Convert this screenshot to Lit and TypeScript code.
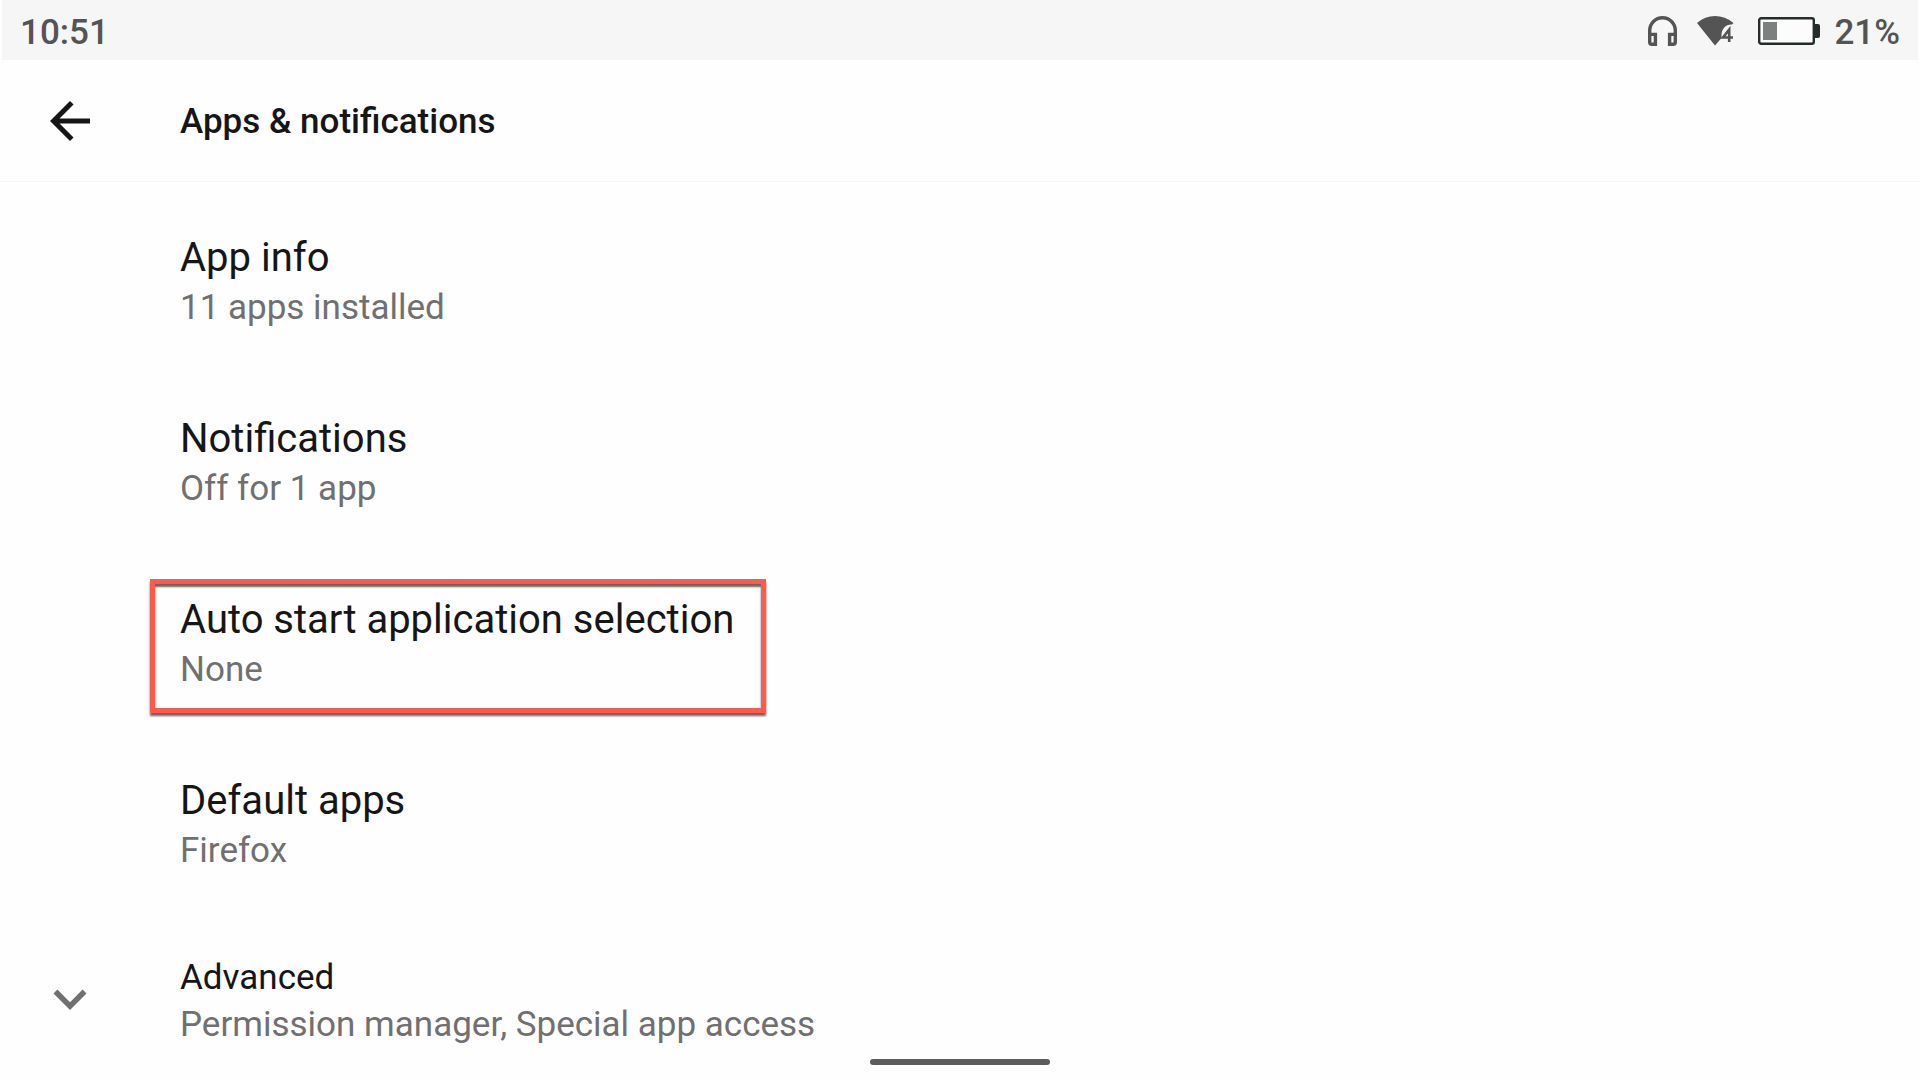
import { LitElement, html, css, svg } from "lit";
import { customElement, property } from "lit/decorators.js";

const backIcon = svg`<path d="M20 11H7.83l5.59-5.59L12 4l-8 8 8 8 1.41-1.41L7.83 13H20v-2z"/>`;
const expandIcon = svg`<path d="M16.59 8.59L12 13.17 7.41 8.59 6 10l6 6 6-6z"/>`;

interface Entry {
  title: string;
  summary: string;
  highlighted?: boolean;
}

const ENTRIES: Entry[] = [
  { title: "App info", summary: "11 apps installed" },
  { title: "Notifications", summary: "Off for 1 app" },
  { title: "Auto start application selection", summary: "None", highlighted: true },
  { title: "Default apps", summary: "Firefox" },
];

@customElement("status-bar")
export class StatusBar extends LitElement {
  @property() time = "";
  @property() battery = "";

  static styles = css`
    :host {
      display: flex;
      align-items: center;
      justify-content: space-between;
      box-sizing: border-box;
      height: 60px;
      margin: 0 2px;
      padding: 6px 18px 0;
      background: #f6f6f6;
      color: #545454;
      font-size: 35px;
      line-height: 48px;
      font-weight: 500;
    }
    .status,
    .icons {
      display: flex;
      align-items: center;
    }
    .icons {
      padding-bottom: 4px;
    }
    .headphones {
      margin-right: 20px;
    }
    .wifi {
      margin-right: 24px;
    }
    .cell {
      margin-right: 14px;
    }
    svg {
      display: block;
    }
  `;

  render() {
    return html`
      <time>${this.time}</time>
      <div class="status">
        <div class="icons">
          <svg class="headphones" width="29" height="30" viewBox="0 0 29 30" fill="none" stroke="#545454" stroke-width="3.400" aria-hidden="true">
            <path d="M1.700 20V14.500a12.800 12.800 0 0 1 25.600 0V20" />
            <path d="M1.700 18.400H7.400V28.300H3.700a2 2 0 0 1-2-2zM27.300 18.400H21.600V28.300H25.300a2 2 0 0 0 2-2z" />
          </svg>
          <svg class="wifi" width="37" height="30" viewBox="0 0 37 30" aria-hidden="true">
            <path fill="#545454" d="M0 7Q8 0 18 0T36.500 7L35 8.500C29 8 24.500 13 24.500 19V22L18 29.500z" />
            <path fill="none" stroke="#545454" stroke-width="2.600" d="M32.200 26V13.500L26 21.500H36" />
          </svg>
          <svg class="cell" width="62" height="30" viewBox="0 0 62 30" aria-hidden="true">
            <rect x="1.200" y="2.200" width="54.600" height="25.600" rx="2" fill="#fcfcfc" stroke="#262b2b" stroke-width="2.400" />
            <rect x="5" y="6" width="14" height="18" fill="#7c807f" />
            <path fill="#262b2b" d="M56 8h4q2 0 2 2v10q0 2-2 2h-4z" />
          </svg>
        </div>
        <span>${this.battery}</span>
      </div>
    `;
  }
}

@customElement("app-root")
export class AppRoot extends LitElement {
  static styles = css`
    :host {
      display: flex;
      flex-direction: column;
      box-sizing: border-box;
      min-height: 100vh;
      background: #fefefe;
      color: #161616;
      font-family: Roboto, "Liberation Sans", sans-serif;
    }
    button {
      margin: 0;
      border: 0;
      background: none;
      color: inherit;
      font: inherit;
      text-align: left;
      cursor: pointer;
    }
    svg {
      display: block;
      fill: currentColor;
    }
    .toolbar {
      display: flex;
      align-items: center;
      gap: 80px;
      box-sizing: border-box;
      padding: 0 40px;
      height: 122px;
      border-bottom: 1px solid #f6f6f6;
    }
    .back {
      padding: 0;
    }
    h1 {
      margin: 0;
      padding-top: 3px;
      font-size: 35px;
      line-height: 48px;
      font-weight: 500;
    }
    .list {
      margin: 0;
      padding: 9px 0 0;
      list-style: none;
    }
    .entry {
      display: flex;
      width: 100%;
      padding: 41px 40px 40px 180px;
    }
    .text {
      display: flex;
      flex-direction: column;
      position: relative;
    }
    .title {
      font-size: 40px;
      line-height: 52px;
    }
    .summary {
      font-size: 35px;
      line-height: 48px;
      color: #707070;
    }
    .marked::after {
      content: "";
      position: absolute;
      inset: -15px -32px -19px -30px;
      border: 5px solid #ff5a4c;
      box-shadow: 0 3px 2px #666, inset 0 3px 2px #666;
    }
    .advanced {
      display: flex;
      gap: 77px;
      width: 100%;
      padding: 39px 37px 30px;
    }
    .advanced .title {
      font-size: 35px;
      line-height: 47px;
    }
    .chevron {
      margin-top: 12px;
      color: #707070;
    }
    .home {
      position: fixed;
      bottom: 15px;
      left: 50%;
      width: 180px;
      height: 6px;
      margin-left: -90px;
      border-radius: 3px;
      background: #5c5c5c;
    }
  `;

  render() {
    return html`
      <status-bar time="10:51" battery="21%"></status-bar>
      <header class="toolbar">
        <button class="back" aria-label="Back">
          <svg width="60" height="60" viewBox="0 0 24 24">${backIcon}</svg>
        </button>
        <h1>Apps &amp; notifications</h1>
      </header>
      <main>
        <ul class="list">
          ${ENTRIES.map(
            (e) => html`<li>
              <button class="entry">
                <span class=${e.highlighted ? "text marked" : "text"}>
                  <span class="title">${e.title}</span>
                  <span class="summary">${e.summary}</span>
                </span>
              </button>
            </li>`
          )}
          <li>
            <button class="advanced" aria-expanded="false">
              <svg class="chevron" width="66" height="66" viewBox="0 0 24 24">${expandIcon}</svg>
              <span class="text">
                <span class="title">Advanced</span>
                <span class="summary">Permission manager, Special app access</span>
              </span>
            </button>
          </li>
        </ul>
      </main>
      <div class="home"></div>
    `;
  }
}
